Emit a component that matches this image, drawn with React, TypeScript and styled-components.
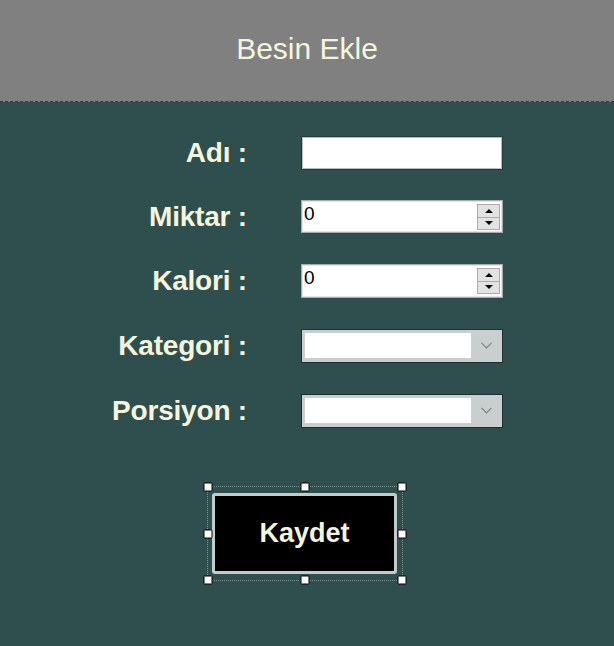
import React from "react";
import styled, { createGlobalStyle } from "styled-components";

const Global = createGlobalStyle`
  html, body {
    margin: 0;
    padding: 0;
    background: #2f4f4f;
  }
  #root {
    min-height: 100vh;
  }
`;

const Page = styled.div`
  width: 614px;
  min-height: 646px;
  background: #2f4f4f;
  font-family: "Liberation Sans", Arial, sans-serif;
`;

const Header = styled.div`
  height: 102px;
  background: #808080;
  border-bottom: 1px dashed #3a3a3a;
  display: flex;
  align-items: center;
  justify-content: center;
  padding-bottom: 4px;
  box-sizing: border-box;
`;

const Title = styled.h1`
  margin: 0;
  font-size: 30px;
  font-weight: normal;
  color: #f5f5dc;
`;

const Form = styled.div`
  display: grid;
  grid-template-columns: 247px 202px;
  grid-template-rows: 32px 33px 34px 34px 34px;
  column-gap: 54px;
  row-gap: 31px;
  padding-top: 35px;
`;

const Label = styled.label`
  justify-self: end;
  align-self: center;
  font-size: 28px;
  font-weight: bold;
  color: #f5f5dc;
  white-space: nowrap;
  letter-spacing: -0.2px;
`;

const TextBox = styled.div`
  box-sizing: border-box;
  width: 200px;
  height: 32px;
  margin-left: 1px;
  background: #fff;
  border: 1px solid #b6c0c0;
  box-shadow: 0 0 0 1px #223c3c;
`;

const NumberBox = styled.div`
  box-sizing: border-box;
  width: 202px;
  height: 100%;
  background: #fff;
  border: 1px solid #a7adad;
  box-shadow: inset 0 0 0 1px #e4e6e6;
  display: flex;
  align-items: flex-start;
  justify-content: space-between;
  padding: 2px 2px 2px 2px;
`;

const NumberValue = styled.span`
  font-family: "Liberation Sans", Arial, sans-serif;
  font-size: 19px;
  line-height: 22px;
  color: #000;
`;

const Spin = styled.div`
  display: flex;
  flex-direction: column;
  width: 23px;
  height: 26px;
  margin-top: 1px;
`;

const SpinButton = styled.div`
  flex: 1;
  box-sizing: border-box;
  background: #e3e3e3;
  border: 1px solid #acacac;
  display: flex;
  align-items: center;
  justify-content: center;
  & + & {
    border-top: none;
  }
`;

const Arrow = styled.span<{ $up?: boolean }>`
  width: 0;
  height: 0;
  border-left: 4px solid transparent;
  border-right: 4px solid transparent;
  ${(p) => (p.$up ? "border-bottom: 4px solid #000;" : "border-top: 4px solid #000;")}
`;

const Combo = styled.div`
  box-sizing: border-box;
  width: 202px;
  height: 100%;
  background: #c9cece;
  border: 1px solid #1c3030;
  padding: 3px 0 4px 3px;
  display: flex;
`;

const ComboField = styled.div`
  flex: 1;
  background: #fff;
`;

const ComboArrow = styled.div`
  width: 31px;
  display: flex;
  align-items: center;
  justify-content: center;
`;

const Actions = styled.div`
  display: flex;
  justify-content: center;
  padding: 58px 5px 0 0;
`;

const Selection = styled.div`
  position: relative;
  box-sizing: border-box;
  width: 196px;
  height: 95px;
  border: 1px dotted #7f9393;
  display: flex;
  align-items: center;
  justify-content: center;
`;

const Handle = styled.span<{ $x: string; $y: string }>`
  position: absolute;
  box-sizing: border-box;
  width: 9px;
  height: 9px;
  background: #fff;
  border: 1px solid #000;
  border-radius: 1px;
  left: ${(p) => p.$x};
  top: ${(p) => p.$y};
  transform: translate(-50%, -50%);
`;

const SaveButton = styled.button`
  box-sizing: border-box;
  width: 185px;
  height: 81px;
  background: #000;
  border: 3px solid #c3cccc;
  border-radius: 3px;
  color: #f5f5dc;
  font-family: "Liberation Sans", Arial, sans-serif;
  font-weight: bold;
  font-size: 27px;
  cursor: pointer;
`;

function Numeric({ value }: { value: string }) {
  return (
    <NumberBox>
      <NumberValue>{value}</NumberValue>
      <Spin>
        <SpinButton>
          <Arrow $up />
        </SpinButton>
        <SpinButton>
          <Arrow />
        </SpinButton>
      </Spin>
    </NumberBox>
  );
}

function ComboBox() {
  return (
    <Combo>
      <ComboField />
      <ComboArrow>
        <svg width="11" height="7" viewBox="0 0 11 7">
          <polyline points="0.5,0.8 5.5,5.8 10.5,0.8" fill="none" stroke="#7d8585" strokeWidth="1.2" />
        </svg>
      </ComboArrow>
    </Combo>
  );
}

const handles: [string, string][] = [
  ["0%", "0%"],
  ["50%", "0%"],
  ["100%", "0%"],
  ["0%", "50%"],
  ["100%", "50%"],
  ["0%", "100%"],
  ["50%", "100%"],
  ["100%", "100%"],
];

export default function App() {
  return (
    <Page>
      <Global />
      <Header>
        <Title>Besin Ekle</Title>
      </Header>
      <Form>
        <Label>Adı :</Label>
        <TextBox />
        <Label>Miktar :</Label>
        <Numeric value="0" />
        <Label>Kalori :</Label>
        <Numeric value="0" />
        <Label>Kategori :</Label>
        <ComboBox />
        <Label>Porsiyon :</Label>
        <ComboBox />
      </Form>
      <Actions>
        <Selection>
          <SaveButton>Kaydet</SaveButton>
          {handles.map(([x, y], i) => (
            <Handle key={i} $x={x} $y={y} />
          ))}
        </Selection>
      </Actions>
    </Page>
  );
}
